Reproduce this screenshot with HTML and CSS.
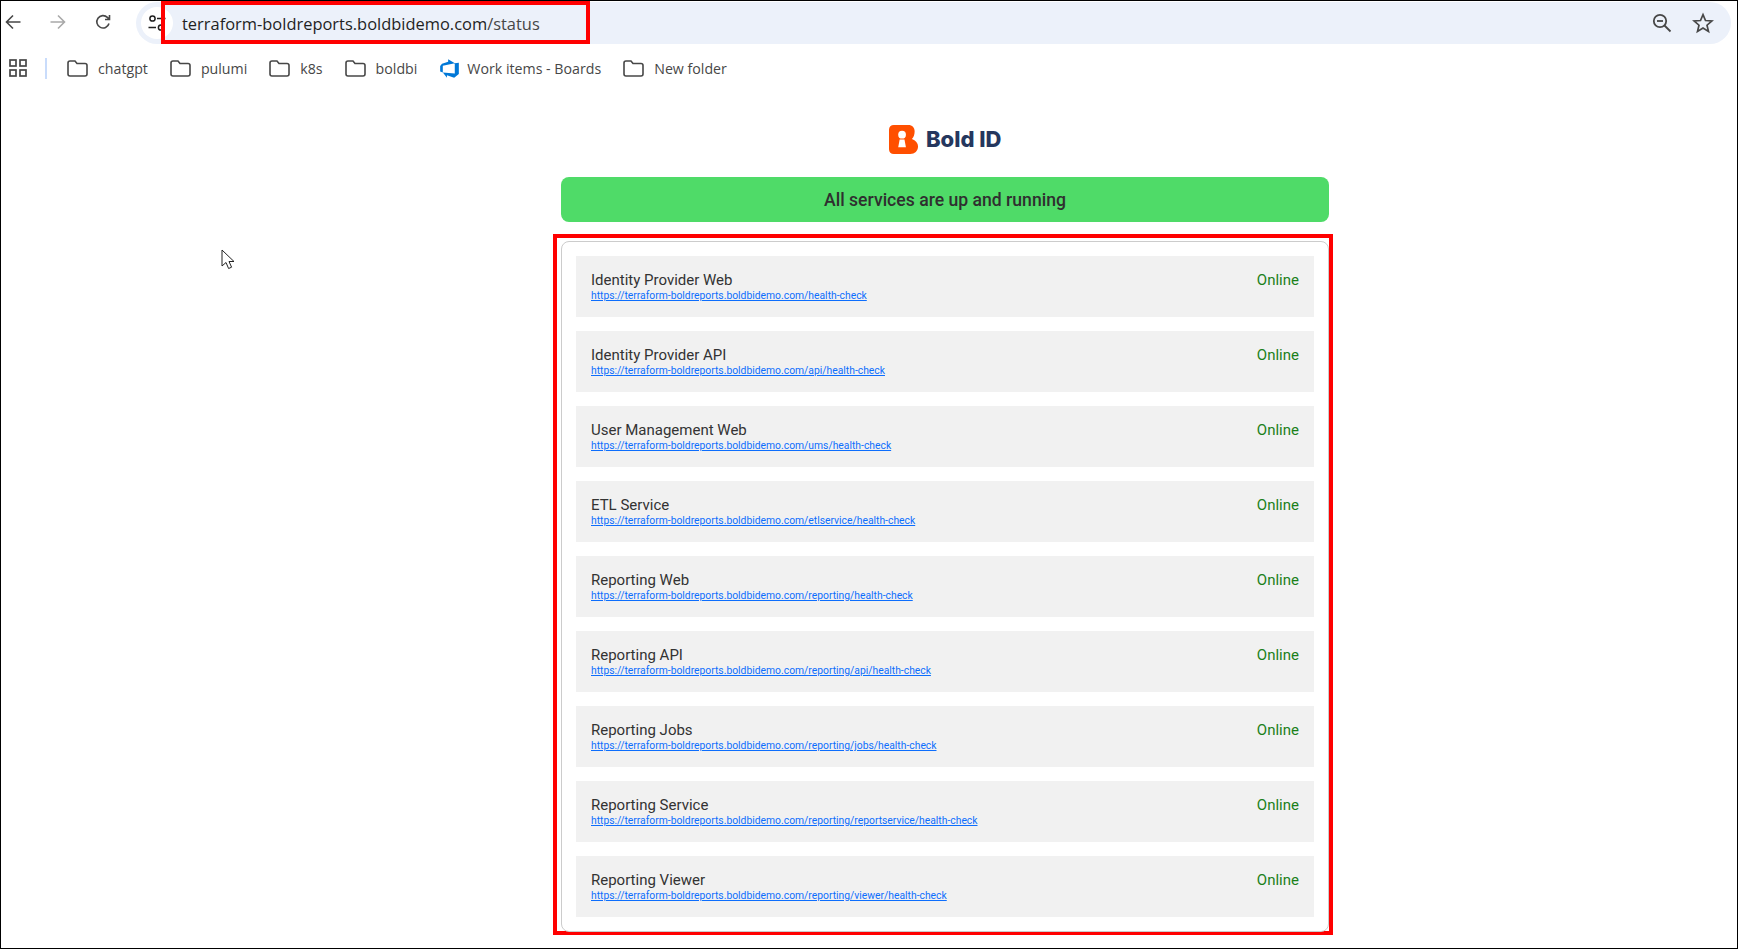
FILE: index.html
```html
<!DOCTYPE html>
<html lang="en">
<head>
    <meta charset="UTF-8">
    <title>Status</title>
    <link rel="stylesheet" href="styles.css">
</head>
<body>
    <div class="frame">
        <div class="toolbar">
            <svg class="nav_icon" width="16" height="16" viewBox="0 0 16 16"><path d="M15.5 8H1.5M8 1.5 1.5 8 8 14.5" fill="none" stroke="#474747" stroke-width="1.6"/></svg>
            <svg class="nav_icon" width="16" height="16" viewBox="0 0 16 16"><path d="M.5 8h14M8 1.5 14.5 8 8 14.5" fill="none" stroke="#a9a9a9" stroke-width="1.6"/></svg>
            <svg class="nav_icon" width="16" height="16" viewBox="0 0 16 16"><path d="M14 9.5A6.2 6.2 0 1 1 12.4 3.4L14.5 5.5M14.5 1v4.5H10" fill="none" stroke="#474747" stroke-width="1.6"/></svg>
            <div class="omnibox">
                <span class="chip">
                    <svg width="18" height="18" viewBox="0 0 18 18"><g fill="none" stroke="#1f1f1f" stroke-width="1.5"><circle cx="4.5" cy="4.5" r="2.6"/><path d="M9 4.5h8.5M.5 13.5H8"/><circle cx="13" cy="13.5" r="2.6"/></g></svg>
                </span>
                <span class="url">terraform-boldreports.boldbidemo.com<span class="url_path">/status</span></span>
                <span class="omni_right">
                    <svg width="20" height="20" viewBox="0 0 20 20"><g fill="none" stroke="#474747" stroke-width="1.8"><circle cx="8" cy="8" r="6.2"/><path d="M12.5 12.5 18.5 18.5"/><path d="M5 8h6"/></g></svg>
                    <svg width="22" height="22" viewBox="0 0 22 22"><path d="M11 2.6l2.5 5.9 6.4.5-4.9 4.2 1.5 6.2L11 16.1l-5.5 3.3L7 13.2 2.1 9l6.4-.5z" fill="none" stroke="#474747" stroke-width="1.7"/></svg>
                </span>
                <div class="url_mark"></div>
            </div>
        </div>

        <div class="bookmarks">
            <svg class="apps" width="18" height="18" viewBox="0 0 18 18"><g fill="none" stroke="#474747" stroke-width="1.7"><rect x="1" y="1" width="6" height="6"/><rect x="11" y="1" width="6" height="6"/><rect x="1" y="11" width="6" height="6"/><rect x="11" y="11" width="6" height="6"/></g></svg>
            <span class="divider"></span>
            <span class="mark"><svg class="folder" viewBox="0 0 21 17"><path d="M1 3a2 2 0 0 1 2-2h5l2 2.500h8a2 2 0 0 1 2 2V14a2 2 0 0 1-2 2H3a2 2 0 0 1-2-2z" fill="none" stroke="#474747" stroke-width="1.6"/></svg>chatgpt</span>
            <span class="mark"><svg class="folder" viewBox="0 0 21 17"><path d="M1 3a2 2 0 0 1 2-2h5l2 2.500h8a2 2 0 0 1 2 2V14a2 2 0 0 1-2 2H3a2 2 0 0 1-2-2z" fill="none" stroke="#474747" stroke-width="1.6"/></svg>pulumi</span>
            <span class="mark"><svg class="folder" viewBox="0 0 21 17"><path d="M1 3a2 2 0 0 1 2-2h5l2 2.500h8a2 2 0 0 1 2 2V14a2 2 0 0 1-2 2H3a2 2 0 0 1-2-2z" fill="none" stroke="#474747" stroke-width="1.6"/></svg>k8s</span>
            <span class="mark"><svg class="folder" viewBox="0 0 21 17"><path d="M1 3a2 2 0 0 1 2-2h5l2 2.500h8a2 2 0 0 1 2 2V14a2 2 0 0 1-2 2H3a2 2 0 0 1-2-2z" fill="none" stroke="#474747" stroke-width="1.6"/></svg>boldbi</span>
            <span class="mark mark_azure"><svg width="21" height="21" viewBox="0 0 18 18"><path d="M17 4v9.740l-4 3.280-6.200-2.260V17L3.290 12.410l10.230.8V4.440zm-3.410.49L7.850 1v2.290L2.580 4.840 1 6.870v4.610l2.260 1V6.570z" fill="#0078d7"/></svg>Work items - Boards</span>
            <span class="mark"><svg class="folder" viewBox="0 0 21 17"><path d="M1 3a2 2 0 0 1 2-2h5l2 2.500h8a2 2 0 0 1 2 2V14a2 2 0 0 1-2 2H3a2 2 0 0 1-2-2z" fill="none" stroke="#474747" stroke-width="1.6"/></svg>New folder</span>
        </div>

        <div class="page">
            <svg class="cursor" width="14" height="21" viewBox="0 0 14 21"><path d="M1 1v16l4-3.500 2.600 6 3-1.300-2.600-5.700h5z" fill="#fff" stroke="#222" stroke-width="1"/></svg>

            <div class="column">
                <div class="logo">
                    <svg width="30" height="29" viewBox="0 0 31 30" preserveAspectRatio="none"><path d="M5 0h15c4 0 6.500 2.600 6.500 6.500 0 3.500-1 6-2.800 8 3.800 1.500 6.300 4 6.300 7.500 0 5-3.500 8-8 8H5c-3 0-5-2-5-5V5c0-3 2-5 5-5z" fill="#ff4f00"/><circle cx="13.500" cy="10" r="4" fill="#fff"/><path d="M11 15h5l1.500 8h-8z" fill="#fff"/></svg>
                    <span class="logo_text">Bold ID</span>
                </div>
                <div class="banner">All services are up and running</div>
            </div>

            <div class="mark_box">
                <div class="card">
                    <div class="service">
                        <div><div class="service_name">Identity Provider Web</div><a class="service_link" href="#">https://terraform-boldreports.boldbidemo.com/health-check</a></div>
                        <span class="service_state">Online</span>
                    </div>
                    <div class="service">
                        <div><div class="service_name">Identity Provider API</div><a class="service_link" href="#">https://terraform-boldreports.boldbidemo.com/api/health-check</a></div>
                        <span class="service_state">Online</span>
                    </div>
                    <div class="service">
                        <div><div class="service_name">User Management Web</div><a class="service_link" href="#">https://terraform-boldreports.boldbidemo.com/ums/health-check</a></div>
                        <span class="service_state">Online</span>
                    </div>
                    <div class="service">
                        <div><div class="service_name">ETL Service</div><a class="service_link" href="#">https://terraform-boldreports.boldbidemo.com/etlservice/health-check</a></div>
                        <span class="service_state">Online</span>
                    </div>
                    <div class="service">
                        <div><div class="service_name">Reporting Web</div><a class="service_link" href="#">https://terraform-boldreports.boldbidemo.com/reporting/health-check</a></div>
                        <span class="service_state">Online</span>
                    </div>
                    <div class="service">
                        <div><div class="service_name">Reporting API</div><a class="service_link" href="#">https://terraform-boldreports.boldbidemo.com/reporting/api/health-check</a></div>
                        <span class="service_state">Online</span>
                    </div>
                    <div class="service">
                        <div><div class="service_name">Reporting Jobs</div><a class="service_link" href="#">https://terraform-boldreports.boldbidemo.com/reporting/jobs/health-check</a></div>
                        <span class="service_state">Online</span>
                    </div>
                    <div class="service">
                        <div><div class="service_name">Reporting Service</div><a class="service_link" href="#">https://terraform-boldreports.boldbidemo.com/reporting/reportservice/health-check</a></div>
                        <span class="service_state">Online</span>
                    </div>
                    <div class="service">
                        <div><div class="service_name">Reporting Viewer</div><a class="service_link" href="#">https://terraform-boldreports.boldbidemo.com/reporting/viewer/health-check</a></div>
                        <span class="service_state">Online</span>
                    </div>
                </div>
            </div>
        </div>
    </div>
</body>
</html>
```

FILE: styles.css
```css
*{
    margin: 0;
    padding: 0;
    box-sizing: border-box;
}

body{
    background-color: #fff;
    font-family: "Roboto", "Liberation Sans", sans-serif;
    overflow: hidden;
}

.frame{
    width: 1738px;
    height: 949px;
    border: 1px solid #000;
    overflow: hidden;
    position: relative;
}

.toolbar{
    height: 43px;
    padding: 1px 6px 0 4px;
    display: flex;
    align-items: center;
}

.nav_icon{
    margin-right: 29px;
    margin-top: -2px;
    flex-shrink: 0;
}

.omnibox{
    flex: 1;
    height: 42px;
    margin-left: -4px;
    padding-left: 5px;
    background-color: #ecf1fa;
    border-radius: 21px;
    display: flex;
    align-items: center;
    position: relative;
}

.chip{
    width: 32px;
    height: 32px;
    background-color: #fff;
    border-radius: 50%;
    display: flex;
    align-items: center;
    justify-content: center;
    margin-right: 9px;
}

.url{
    font-family: "Open Sans", "Liberation Sans", sans-serif;
    font-size: 16.45px;
    color: #1f1f1f;
}

.url_path{
    color: #474747;
}

.omni_right{
    margin-left: auto;
    margin-right: 17px;
    display: flex;
    align-items: center;
    gap: 20px;
}

.url_mark{
    position: absolute;
    left: 25px;
    top: -1px;
    width: 429px;
    height: 43px;
    border: 4px solid #f00;
}

.bookmarks{
    height: 48px;
    padding-left: 8px;
    display: flex;
    align-items: center;
    font-family: "Open Sans", "Liberation Sans", sans-serif;
    font-size: 14.2px;
    color: #474747;
}

.divider{
    width: 2px;
    height: 21px;
    background-color: #c9dcfb;
    margin: 0 20px 0 18px;
}

.mark{
    display: flex;
    align-items: center;
    gap: 10px;
    margin-right: 22px;
}

.mark_azure{
    gap: 7px;
}

.folder{
    width: 21px;
    height: 17px;
}

.page{
    padding-left: 552px;
    position: relative;
}

.cursor{
    position: absolute;
    left: 220px;
    top: 125px;
}

.column{
    width: 780px;
    padding: 0 4px 0 8px;
}

.logo{
    height: 30px;
    margin-top: 32px;
    padding-left: 328px;
    display: flex;
    align-items: center;
    gap: 7px;
}

.logo_text{
    font-family: "Inter", "Liberation Sans", sans-serif;
    font-size: 22px;
    font-weight: 800;
    color: #25375e;
}

.banner{
    height: 45px;
    margin-top: 23px;
    background-color: #4fdb68;
    border-radius: 8px;
    display: flex;
    align-items: center;
    justify-content: center;
    font-size: 17.6px;
    font-weight: 500;
    color: #2f2f2f;
}

.mark_box{
    width: 780px;
    height: 701px;
    margin-top: 12px;
    border: 4px solid #f00;
    padding: 3px 0 0 4px;
}

.card{
    height: 691px;
    border: 1px solid #ccc;
    border-radius: 8px;
    padding: 14px;
    display: flex;
    flex-direction: column;
    gap: 14px;
}

.service{
    height: 61px;
    flex-shrink: 0;
    background-color: #f1f1f1;
    padding: 15px;
    display: flex;
    justify-content: space-between;
    align-items: flex-start;
}

.service_name{
    font-size: 15px;
    line-height: 18px;
    color: #333;
}

.service_link{
    display: block;
    font-size: 10.33px;
    line-height: 13px;
    color: #0d6efd;
}

.service_state{
    font-size: 15px;
    line-height: 18px;
    color: #1a801a;
}
```
